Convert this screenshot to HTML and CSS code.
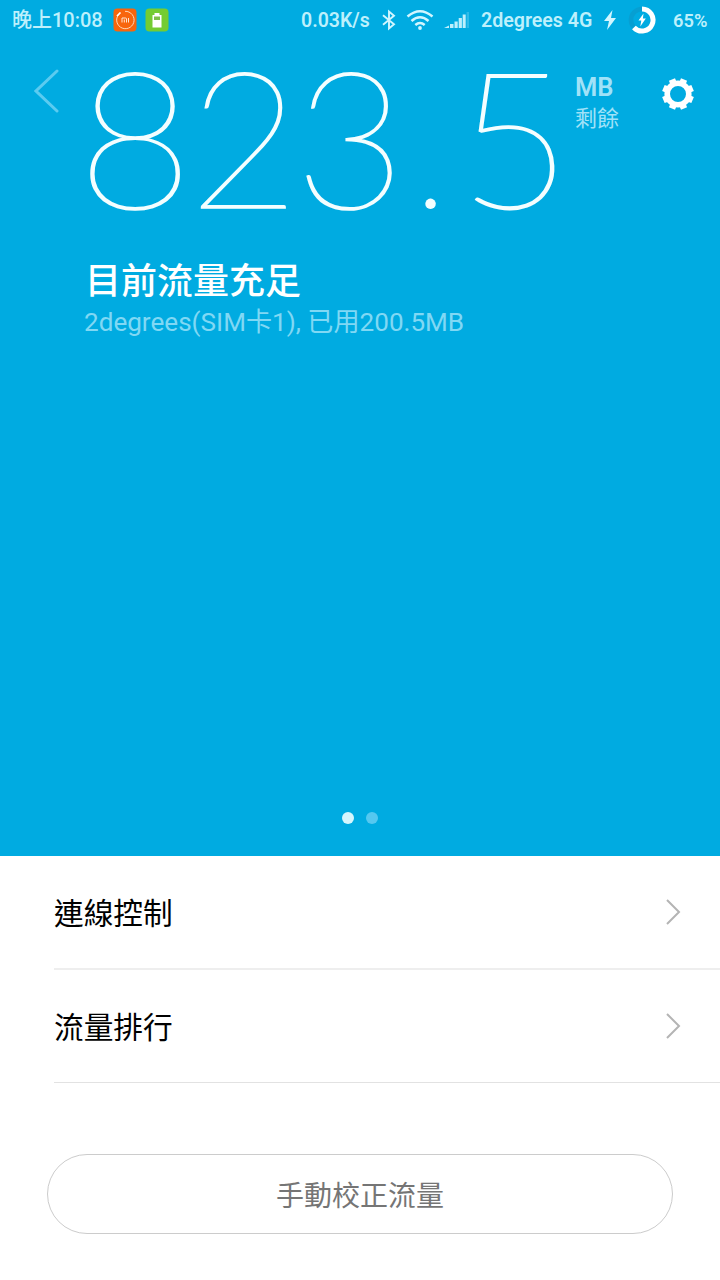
FILE: index.html
```html
<!DOCTYPE html>
<html lang="zh-Hant">
<head>
<meta charset="utf-8">
<title>流量</title>
<link rel="stylesheet" href="styles.css">
</head>
<body>
<main class="screen">
  <section class="hero">
    <header class="status">
      <span class="clock">晚上10:08</span>
      <svg class="app-icon" width="24" height="24" viewBox="0 0 24 24"><rect x=".5" y=".5" width="23" height="23" rx="4" fill="#f8650c"/><path d="M7.2 5A8.7 8.7 0 1 0 12 3.300" fill="none" stroke="#ffd9b8" stroke-width="1"/><path d="M4 8l3.500-3.500" stroke="#fff" stroke-width="1.700"/><path d="M9 14.500v-4.500h3.500q1 0 1 1v3.500M11.300 11.500v3M15.500 10v4.500" fill="none" stroke="#ffe6d2" stroke-width="1"/></svg>
      <svg class="app-icon second" width="24" height="24" viewBox="0 0 24 24"><rect x=".5" y=".5" width="23" height="23" rx="4" fill="#74cc32"/><path d="M9.500 5h5v2h2v12.500h-9V7h2z" fill="#fff"/><path d="M9 8.500h6v3.500h-6z" fill="#7fbf4a"/></svg>
      <span class="speed">0.03K/s</span>
      <svg class="bt" width="14" height="22" viewBox="0 0 14 22"><path d="M1 6.300l11 9-5 4.200v-17l5 4.200-11 9" fill="none" stroke="#d2f6ff" stroke-width="1.900"/></svg>
      <svg class="wifi" width="28" height="22" viewBox="0 0 28 22"><g fill="none" stroke="#d2f6ff" stroke-width="2.500"><path d="M1.500 7.500Q14-3 26.500 7.500"/><path d="M5.500 12Q14 4.500 22.500 12"/><path d="M9.300 16Q14 12 18.700 16"/></g><circle cx="14" cy="19" r="1.900" fill="#d2f6ff"/></svg>
      <svg class="signal" width="26" height="18" viewBox="0 0 26 18"><path d="M0 17l5-2.500v2.500zM6 13h3.500v4H6zM10.500 10.500h3.200v6.500h-3.200zM14.700 7h3.200v10h-3.200zM18.700 3.500h3v13.500h-3z" fill="#bdeffc"/><path d="M22.600 1h2.400v16h-2.400z" fill="#2ebbe8"/></svg>
      <span class="carrier">2degrees 4G</span>
      <svg class="bolt" width="12" height="20" viewBox="0 0 12 20"><path d="M8.500 0L0 11h5L3 20l9-12H7z" fill="#d2f6ff"/></svg>
      <svg class="ring" width="28" height="28" viewBox="0 0 28 28"><circle cx="14" cy="14" r="11" fill="none" stroke="#069fd2" stroke-width="4.600"/><path d="M14 3A11 11 0 1 1 5.900 21.440" fill="none" stroke="#fff" stroke-width="5"/><path d="M15.500 7.500l-5 7h2.800l-1 6 5.500-8h-2.900z" fill="#fff"/></svg>
      <span class="percent">65%</span>
    </header>
    <div class="summary">
      <svg class="back" width="26" height="44" viewBox="0 0 26 44"><path d="M23 2L2 22l21 20" fill="none" stroke="#5bcbf0" stroke-width="3" stroke-linecap="round"/></svg>
      <div class="amount"><span class="digit d8">8</span><span class="digit d2">2</span><span class="digit d3">3</span><span class="digit dot">.</span><span class="digit d5">5</span></div>
      <div class="unit"><span class="mb">MB</span><span class="left">剩餘</span></div>
      <svg class="gear" width="32" height="32" viewBox="-16 -16 32 32"><circle r="10.800" fill="none" stroke="#fff" stroke-width="5.600"/><g stroke="#fff" stroke-width="6.600"><path d="M0-12v-3.800M0 12v3.800M-12 0h-3.800M12 0h3.800" transform="rotate(22.500)"/><path d="M0-12v-3.800M0 12v3.800M-12 0h-3.800M12 0h3.800" transform="rotate(67.500)"/></g></svg>
    </div>
    <h1 class="headline">目前流量充足</h1>
    <p class="usage">2degrees(SIM卡1), 已用200.5MB</p>
    <div class="pager"><i class="page on"></i><i class="page"></i></div>
  </section>
  <nav class="list">
    <a class="row first"><span>連線控制</span><svg width="16" height="28" viewBox="0 0 16 28"><path d="M2 2l12 12L2 26" fill="none" stroke="#b4b4b4" stroke-width="2"/></svg></a>
    <a class="row"><span>流量排行</span><svg width="16" height="28" viewBox="0 0 16 28"><path d="M2 2l12 12L2 26" fill="none" stroke="#b4b4b4" stroke-width="2"/></svg></a>
  </nav>
  <button class="adjust">手動校正流量</button>
</main>
</body>
</html>
```
FILE: styles.css
```css
* { box-sizing: border-box; }
body { margin: 0; font-family: Roboto, "Noto Sans CJK TC", sans-serif; background: #fff; }
.screen { width: 720px; height: 1280px; overflow: hidden; display: flex; flex-direction: column; }
.hero { height: 856px; background: #00abe1; display: flex; flex-direction: column; flex: none; }
.status { height: 40px; flex: none; display: flex; align-items: center; padding-left: 12px; color: #bdf0fc; font-size: 19.5px; font-weight: 600; white-space: nowrap; }
.status svg { flex: none; }
.clock { width: 101px; line-height: 24px; padding-bottom: 1px; font-weight: 500; font-size: 20px; }
.clock, .speed, .carrier, .percent { flex: none; }
.second { margin-left: 8px; }
.speed { margin-left: 132px; width: 81px; }
.bt { width: 14px; }
.wifi { margin-left: 10px; }
.signal { margin-left: 10px; }
.carrier { margin-left: 11px; width: 114px; font-size: 19.6px; }
.bolt { margin-left: 9px; }
.ring { margin-left: 12px; }
.percent { margin-left: 17px; font-size: 18.3px; }
.summary { display: flex; align-items: flex-start; height: 210px; flex: none; padding-left: 34px; }
.back { margin-top: 29px; }
.amount { display: flex; align-items: baseline; flex: none; margin: 19px 0 0 20px; width: 495px; color: #f4feff; font: 100 190px/150px Lato, sans-serif; -webkit-text-stroke: 1.8px #f4feff; }
.digit { flex: none; display: block; }
.d8 { width: 109px; transform: scaleX(1.05); transform-origin: 55px 50%; }
.d2 { width: 106px; }
.d3 { width: 117px; }
.dot { width: 46px; font-size: 160px; -webkit-text-stroke: 0; }
.d5 { width: 110px; transform: scaleX(1.03) skewX(2.5deg); }
.unit { display: flex; flex-direction: column; color: #a0e2f8; width: 87px; padding-top: 32px; }
.mb { font-size: 25.5px; line-height: 30px; font-weight: 600; }
.left { font-size: 22px; line-height: 32px; margin-top: 1px; }
.gear { margin-top: 38px; }
.headline { margin: 8px 0 0 85px; font-size: 36px; line-height: 48px; font-weight: 500; color: #fff; }
.usage { margin: -2px 0 0 84px; font-size: 26.1px; line-height: 36px; color: #80d8f4; }
.pager { display: flex; justify-content: center; gap: 12px; margin-top: auto; padding-bottom: 32px; }
.page { width: 12px; height: 12px; border-radius: 50%; background: #55c8f0; }
.page.on { background: #d5f6fd; }
.list { padding-left: 54px; }
.row { height: 113px; display: flex; align-items: center; justify-content: space-between; padding-right: 39px; border-bottom: 1px solid #e2e2e2; font-size: 29.7px; color: #000; }
.row span { padding-bottom: 1px; }
.row.first { height: 114px; border-bottom: 2px solid #eee; }
.adjust { margin: 71px 47px 0; height: 80px; border: 1px solid #ccc; border-radius: 40px; background: #fff; color: #757575; font: 28px Roboto, "Noto Sans CJK TC", sans-serif; }
```
